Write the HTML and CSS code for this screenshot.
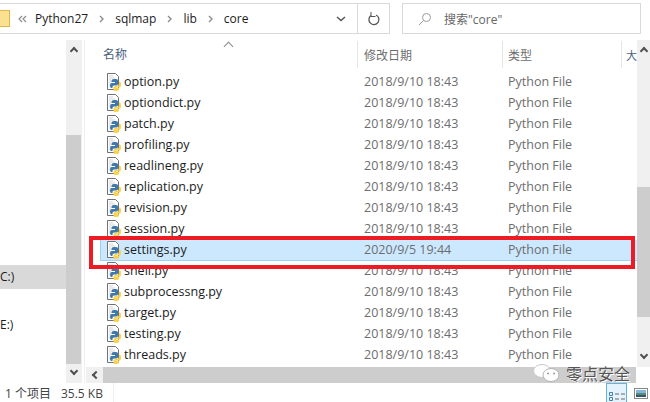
FILE: index.html
```html
<!DOCTYPE html>
<html lang="zh">
<head>
  <meta charset="UTF-8" />
  <title>core</title>
  <link rel="stylesheet" href="styles.css">
</head>
<body>
  <svg width="0" height="0" class="defs">
    <symbol id="pyfile" viewBox="0 0 14 18">
      <path d="M.5.5h8l3 3v13H.5z" fill="#fff" stroke="#6f7174"/>
      <path d="M2.500 3h4M2.500 5h6M2.500 7h2M2.500 9h1M2.500 11h1M2.500 13h1" stroke="#a9abae" stroke-dasharray="1 1"/>
      <path d="M4.500 9V7.500Q4.500 6 7 6h2q2 0 2 1.500V11q0 1.500-2 1.500H7Q5.500 12.500 5.500 14v1H4.500Q3 15 3 12.500 3 10 4.500 10H8V9z" fill="#3f78aa"/>
      <path d="M12 8.500h.5q1.500 0 1.500 3t-1.500 3H9v.5h3v1.500q0 1.500-2.500 1.500h-1Q6.500 18 6.500 16.500V14.500q0-1.500 2-1.500H10q2 0 2-2z" fill="#fbd24c"/>
    </symbol>
    <symbol id="crumbsep" viewBox="0 0 5 8">
      <path d="M1 1l3 3-3 3" fill="none" stroke="#8c8c8c" stroke-width="1.400"/>
    </symbol>
  </svg>

  <div class="window">
    <div class="toolbar">
      <div class="address">
        <div class="folder"></div>
        <svg class="chev" width="9" height="8" viewBox="0 0 9 8"><path d="M4 1L1 4l3 3M8 1L5 4l3 3" fill="none" stroke="#8c8c8c" stroke-width="1.200"/></svg>
        <span class="crumb">Python27</span>
        <svg class="sep" width="5" height="8"><use href="#crumbsep"/></svg>
        <span class="crumb">sqlmap</span>
        <svg class="sep" width="5" height="8"><use href="#crumbsep"/></svg>
        <span class="crumb">lib</span>
        <svg class="sep" width="5" height="8"><use href="#crumbsep"/></svg>
        <span class="crumb">core</span>
        <div class="drop">
          <svg width="10" height="6" viewBox="0 0 10 6"><path d="M1 1l4 3.500L9 1" fill="none" stroke="#555" stroke-width="1.500"/></svg>
        </div>
        <div class="refresh">
          <svg width="14" height="14" viewBox="0 0 14 14"><path d="M4 3.500a5 5 0 1 0 5-.5" fill="none" stroke="#555" stroke-width="1.300"/><path d="M4 0v4.500h4.500" fill="none" stroke="#555" stroke-width="1"/></svg>
        </div>
      </div>
      <div class="search">
        <svg width="14" height="14" viewBox="0 0 14 14"><circle cx="8.500" cy="5.500" r="4" fill="none" stroke="#999"/><path d="M5.500 8.500L1 13" stroke="#999"/></svg>
        <span>搜索"core"</span>
      </div>
    </div>

    <div class="main">
      <aside class="nav">
        <div class="nav-list">
          <div class="drive sel">C:)</div>
          <div class="drive">E:)</div>
        </div>
        <div class="vbar navbar">
          <span class="up"></span>
          <span class="thumb"></span>
          <span class="down"></span>
        </div>
      </aside>

      <section class="files">
        <div class="body">
          <div class="listing">
            <div class="sort-arrow"></div>
            <div class="head">
              <div class="col name">名称</div>
              <div class="col date">修改日期</div>
              <div class="col type">类型</div>
              <div class="col size">大</div>
            </div>
            <div class="rows" id="rows"></div>
          </div>
          <div class="vbar listbar">
            <span class="up"></span>
            <span class="thumb"></span>
            <span class="rest"></span>
            <span class="down"></span>
          </div>
        </div>
        <div class="hbar">
          <span class="left"></span>
          <span class="hthumb"></span>
        </div>
      </section>
    </div>

    <footer class="status">
      <span>1 个项目</span><span class="bytes">35.5 KB</span>
      <div class="views">
        <div class="view on">
          <svg width="16" height="14" viewBox="0 0 16 14"><path d="M.5.500h3v3h-3zM.5 5.500h3v3h-3z" fill="none" stroke="#3f80bd"/><path d="M.5 10.500h3v3h-3z" fill="#d33" stroke="#d33"/><path d="M6 2h4M12 2h4M6 7h4M12 7h4M6 12h4M12 12h4" stroke="#666"/></svg>
        </div>
        <div class="view">
          <svg width="14" height="11" viewBox="0 0 14 11"><rect x=".5" y=".5" width="13" height="10" fill="#fff" stroke="#888"/><rect x="2" y="2" width="10" height="3" fill="#7fb7de"/><rect x="2" y="5" width="10" height="2" fill="#5b8a74"/><rect x="2" y="7" width="10" height="2" fill="#34566e"/></svg>
        </div>
      </div>
    </footer>
  </div>

  <div class="highlight"></div>
  <div class="watermark">
    <svg width="27" height="18" viewBox="0 0 27 18"><ellipse cx="9" cy="7" rx="8.500" ry="6.500" fill="#fff" stroke="#c8c8c8"/><ellipse cx="18" cy="11" rx="8" ry="6.500" fill="#fff" stroke="#b5b5b5"/><circle cx="15" cy="9.500" r="1" fill="#999"/><circle cx="21" cy="9.500" r="1" fill="#999"/></svg>
    <span>零点安全</span>
  </div>

  <script>
    const files = [
      ['option.py', '2018/9/10 18:43'],
      ['optiondict.py', '2018/9/10 18:43'],
      ['patch.py', '2018/9/10 18:43'],
      ['profiling.py', '2018/9/10 18:43'],
      ['readlineng.py', '2018/9/10 18:43'],
      ['replication.py', '2018/9/10 18:43'],
      ['revision.py', '2018/9/10 18:43'],
      ['session.py', '2018/9/10 18:43'],
      ['settings.py', '2020/9/5 19:44'],
      ['shell.py', '2018/9/10 18:43'],
      ['subprocessng.py', '2018/9/10 18:43'],
      ['target.py', '2018/9/10 18:43'],
      ['testing.py', '2018/9/10 18:43'],
      ['threads.py', '2018/9/10 18:43']
    ];

    document.getElementById('rows').innerHTML = files.map(f => `
      <div class="row ${f[0] === 'settings.py' ? 'picked' : ''}">
        <div class="col name"><svg width="14" height="18"><use href="#pyfile"/></svg>${f[0]}</div>
        <div class="col date">${f[1]}</div>
        <div class="col type">Python File</div>
      </div>`).join('');
  </script>
</body>
</html>
```

FILE: styles.css
```css
html, body {
  margin: 0;
  height: 100%;
}
body {
  position: relative;
  width: 650px;
  height: 402px;
  overflow: hidden;
  background: #fff;
  font-family: "Open Sans", "Noto Sans CJK SC", sans-serif;
  font-size: 12.500px;
  color: #1c1c1c;
}
.defs {
  position: absolute;
}
.window {
  display: flex;
  flex-direction: column;
  height: 402px;
}
.toolbar {
  display: flex;
  flex: none;
  height: 31px;
  margin-top: 3px;
  gap: 12px;
}
.address {
  display: flex;
  align-items: center;
  width: 390px;
  border: 1px solid #d9d9d9;
  border-left: 0;
  box-sizing: border-box;
  font-size: 12px;
}
.folder {
  width: 10px;
  height: 17px;
  margin-right: 8px;
  background: #fbe08f;
  border: 1px solid #dcb64f;
  border-left: 0;
  box-sizing: border-box;
}
.chev {
  margin-right: 8px;
}
.sep {
  margin: 0 11px;
}
.drop {
  margin-left: auto;
  width: 32px;
  height: 100%;
  display: flex;
  align-items: center;
  justify-content: center;
}
.refresh {
  width: 31px;
  height: 100%;
  border-left: 1px solid #d9d9d9;
  display: flex;
  align-items: center;
  justify-content: center;
}
.search {
  flex: 0 0 239px;
  box-sizing: border-box;
  border: 1px solid #d9d9d9;
  display: flex;
  align-items: center;
  gap: 12px;
  padding-left: 15px;
  color: #666;
  font-size: 12px;
}
.main {
  display: flex;
  flex: none;
  height: 343px;
  margin-top: 6px;
}
.nav {
  display: flex;
  width: 84px;
  flex: none;
}
.nav-list {
  width: 66px;
  flex: none;
  font-size: 12px;
}
.drive {
  height: 24px;
  line-height: 24px;
}
.drive.sel {
  margin-top: 225px;
  background: #d9d9d9;
}
.drive:last-child {
  margin-top: 24px;
}
.vbar {
  display: flex;
  flex-direction: column;
  background: #f0f0f0;
}
.navbar {
  width: 16px;
}
.up, .down {
  height: 17px;
  flex: none;
  position: relative;
}
.up::after, .down::after {
  content: "";
  position: absolute;
  left: 5px;
  width: 4px;
  height: 4px;
  border: solid #505050;
  border-width: 2px 0 0 2px;
}
.up::after {
  top: 8px;
  transform: rotate(45deg);
}
.down::after {
  top: 2px;
  transform: rotate(225deg);
}
.thumb {
  background: #cdcdcd;
}
.navbar .thumb {
  margin: 78px 1px 0 0;
  height: 229px;
}
.navbar .down {
  margin-top: auto;
}
.files {
  flex: 1;
  min-width: 0;
  display: flex;
  flex-direction: column;
  border-left: 1px solid #f0f0f0;
}
.body {
  display: flex;
  flex: none;
  height: 327px;
}
.listing {
  position: relative;
  flex: 1;
  min-width: 0;
  overflow: hidden;
}
.sort-arrow {
  position: absolute;
  left: 140px;
  top: 3px;
  width: 6px;
  height: 6px;
  border: solid #8a8a8a;
  border-width: 1px 0 0 1px;
  transform: rotate(45deg);
}
.head {
  display: flex;
  height: 27px;
  margin-top: 1px;
}
.head .col {
  line-height: 29px;
  font-size: 12px;
  color: #4c607a;
  border-left: 1px solid #e5e5e5;
}
.head .col.name {
  width: 272px;
  padding-left: 18px;
  border-left: 0;
}
.head .col.date {
  padding-left: 6px;
}
.head .col.type {
  padding-left: 5px;
}
.col {
  flex: none;
  box-sizing: border-box;
  white-space: nowrap;
}
.col.name {
  width: 257px;
  padding-left: 7px;
  display: flex;
  align-items: center;
  gap: 3px;
}
.col.date {
  width: 145px;
  padding-left: 7px;
  color: #6d6d6d;
}
.col.type {
  width: 119px;
  padding-left: 6px;
  color: #6d6d6d;
}
.head .col.size {
  width: 16px;
  padding-left: 4px;
  font-size: 11px;
}
.rows {
  margin: 4px 0 0 15px;
}
.row {
  display: flex;
  align-items: center;
  height: 21px;
  line-height: 21px;
}
.row .col {
  padding-bottom: 2px;
}
.row.picked {
  background: #cce8ff;
  box-shadow: inset 1px -1px 0 #99d1ff;
}
.hbar {
  display: flex;
  flex: none;
  height: 16px;
  margin: 0 14px 0 1px;
  background: #f0f0f0;
}
.left {
  width: 17px;
  position: relative;
}
.left::after {
  content: "";
  position: absolute;
  left: 7px;
  top: 5px;
  width: 4px;
  height: 4px;
  border: solid #505050;
  border-width: 2px 0 0 2px;
  transform: rotate(-45deg);
}
.hthumb {
  flex: 1;
  background: #cdcdcd;
}
.listbar {
  width: 13px;
  flex: none;
}
.listbar .up::after, .listbar .down::after {
  left: 4px;
}
.listbar .thumb {
  flex: none;
  margin-top: 130px;
  height: 130px;
}
.listbar .rest {
  flex: 1;
}
.status {
  position: relative;
  display: flex;
  gap: 10px;
  flex: 1;
  padding-left: 5px;
  line-height: 22px;
  color: #444;
  font-size: 12px;
}
.bytes {
  padding-right: 10px;
  border-right: 1px solid #efefef;
}
.views {
  position: absolute;
  left: 606px;
  top: 0;
  display: flex;
  gap: 3px;
}
.view {
  width: 21px;
  height: 26px;
  display: flex;
  justify-content: center;
  padding-top: 5px;
  box-sizing: border-box;
}
.view.on {
  padding-top: 8px;
  background: #e5f3ff;
  border: 1px solid #5fb3e0;
}
.highlight {
  position: absolute;
  left: 89px;
  top: 236px;
  width: 546px;
  height: 33px;
  box-sizing: border-box;
  border: 4px solid #ed1c24;
}
.watermark {
  position: absolute;
  left: 533px;
  top: 363px;
  display: flex;
  align-items: center;
  gap: 6px;
  color: #555;
  font-size: 16px;
  line-height: 20px;
  font-family: "Noto Sans CJK SC", sans-serif;
  text-shadow: 1px 1px 0 #fff;
}
```
